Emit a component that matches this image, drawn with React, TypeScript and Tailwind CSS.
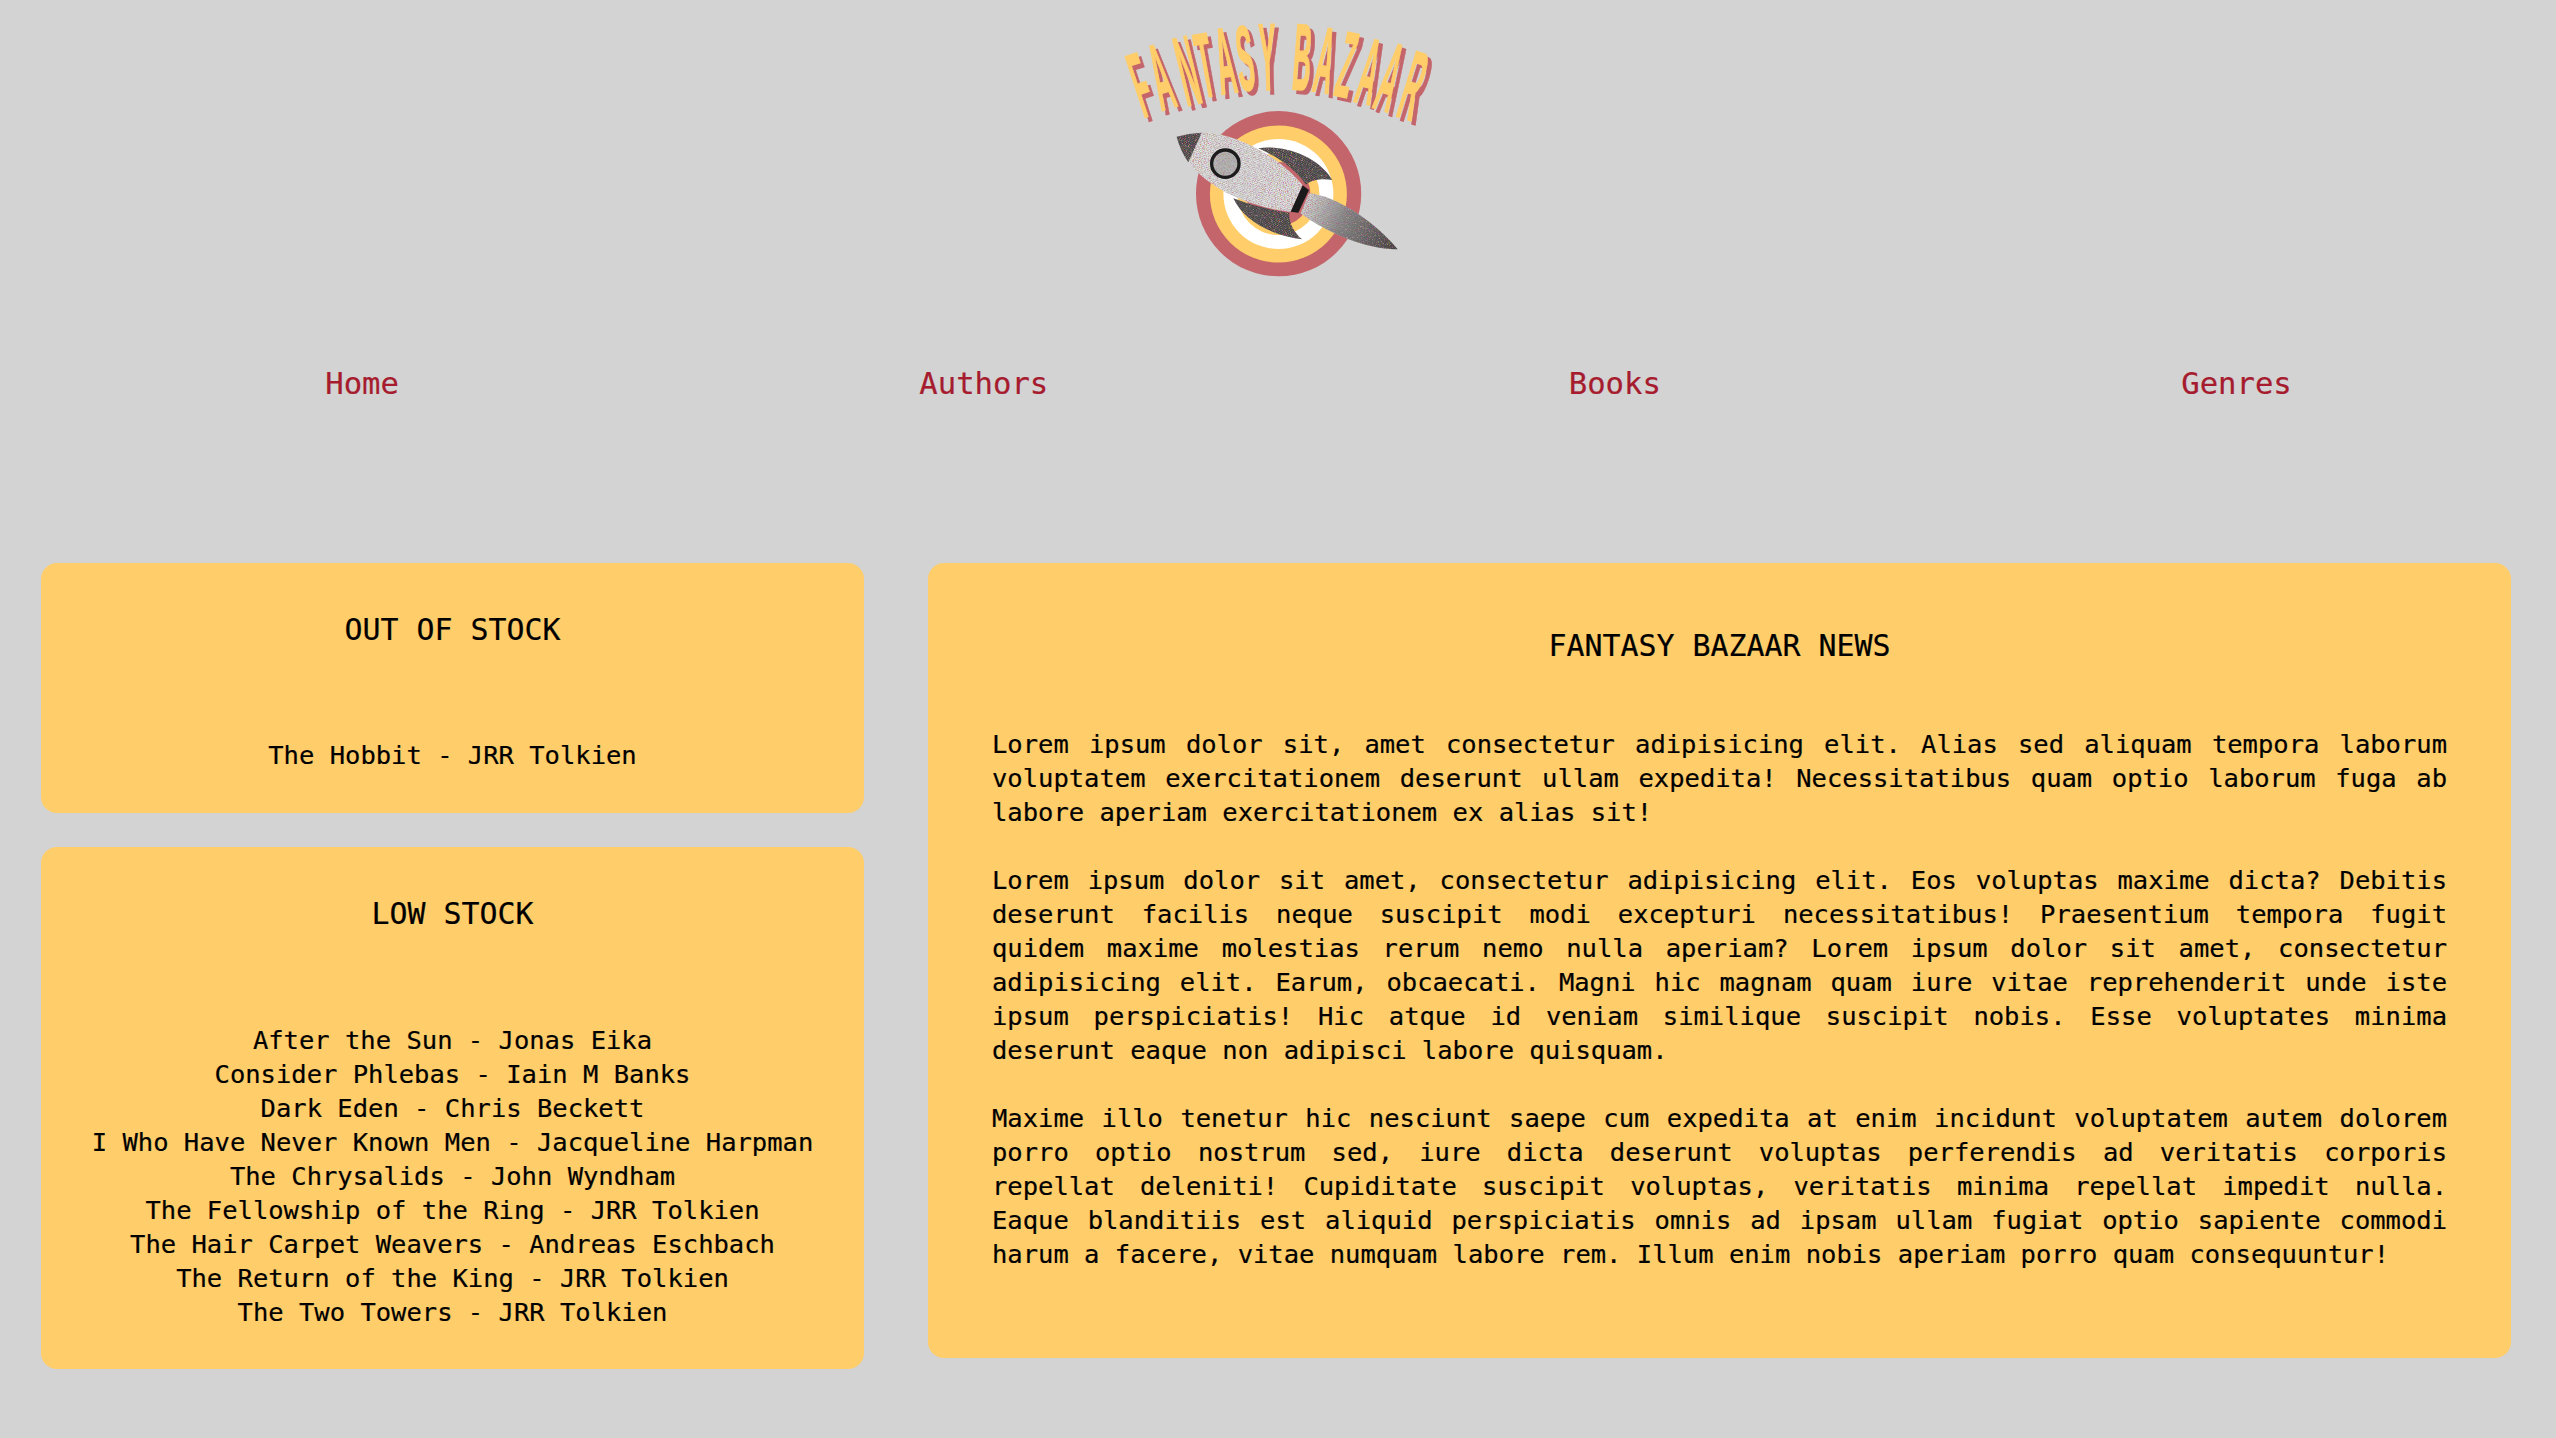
const outOfStock = ['The Hobbit - JRR Tolkien'];

const lowStock = [
  'After the Sun - Jonas Eika',
  'Consider Phlebas - Iain M Banks',
  'Dark Eden - Chris Beckett',
  'I Who Have Never Known Men - Jacqueline Harpman',
  'The Chrysalids - John Wyndham',
  'The Fellowship of the Ring - JRR Tolkien',
  'The Hair Carpet Weavers - Andreas Eschbach',
  'The Return of the King - JRR Tolkien',
  'The Two Towers - JRR Tolkien',
];

const news = [
  'Lorem ipsum dolor sit, amet consectetur adipisicing elit. Alias sed aliquam tempora laborum voluptatem exercitationem deserunt ullam expedita! Necessitatibus quam optio laborum fuga ab labore aperiam exercitationem ex alias sit!',
  'Lorem ipsum dolor sit amet, consectetur adipisicing elit. Eos voluptas maxime dicta? Debitis deserunt facilis neque suscipit modi excepturi necessitatibus! Praesentium tempora fugit quidem maxime molestias rerum nemo nulla aperiam? Lorem ipsum dolor sit amet, consectetur adipisicing elit. Earum, obcaecati. Magni hic magnam quam iure vitae reprehenderit unde iste ipsum perspiciatis! Hic atque id veniam similique suscipit nobis. Esse voluptates minima deserunt eaque non adipisci labore quisquam.',
  'Maxime illo tenetur hic nesciunt saepe cum expedita at enim incidunt voluptatem autem dolorem porro optio nostrum sed, iure dicta deserunt voluptas perferendis ad veritatis corporis repellat deleniti! Cupiditate suscipit voluptas, veritatis minima repellat impedit nulla. Eaque blanditiis est aliquid perspiciatis omnis ad ipsam ullam fugiat optio sapiente commodi harum a facere, vitae numquam labore rem. Illum enim nobis aperiam porro quam consequuntur!',
];

// top and bottom of each arched letter, measured off the logo
const letters: [string, number, number, number, number][] = [
  ['F', 62, 120, 122, 302],
  ['A', 125, 92, 180, 280],
  ['N', 208, 68, 256, 268],
  ['T', 268, 58, 302, 245],
  ['A', 330, 42, 360, 235],
  ['S', 395, 35, 415, 225],
  ['Y', 470, 28, 475, 225],
  ['B', 585, 30, 570, 225],
  ['A', 660, 40, 630, 232],
  ['Z', 730, 55, 690, 245],
  ['A', 800, 75, 755, 265],
  ['A', 870, 90, 810, 285],
  ['R', 940, 115, 880, 310],
];

function ArchedTitle({ color, dx, dy }: { color: string; dx: number; dy: number }) {
  return (
    <g transform={`translate(${1110 + dx} ${15 + dy}) scale(0.3333)`}>
      {letters.map(([ch, tx, ty, bx, by], i) => {
        const angle = (Math.atan2(tx - bx, by - ty) * 180) / Math.PI;
        const len = Math.hypot(tx - bx, by - ty);
        return (
          <text
            key={i}
            transform={`translate(${bx} ${by}) rotate(${angle}) scale(0.27 ${len / 194})`}
            fontFamily="'Liberation Sans', sans-serif"
            fontWeight="700"
            fontSize="282"
            textAnchor="middle"
            fill={color}
            stroke={color}
            strokeWidth="4"
          >
            {ch}
          </text>
        );
      })}
    </g>
  );
}

function Logo() {
  return (
    <svg viewBox="1078 0 400 300" className="mx-auto block h-[300px] w-[400px]">
      <defs>
        <pattern id="lightGrain" width="6" height="6" patternUnits="userSpaceOnUse" patternTransform="rotate(-20)">
          <rect width="6" height="6" fill="#ebe9eb" />
          <rect width="6" height="1.5" fill="#a8aca8" />
        </pattern>
        <pattern id="darkGrain" width="5" height="5" patternUnits="userSpaceOnUse" patternTransform="rotate(30)">
          <rect width="5" height="5" fill="#5a5a5a" />
          <rect width="5" height="1.7" fill="#2c2c2c" />
        </pattern>
        <linearGradient id="flameShade" x1="392" y1="260" x2="683" y2="418" gradientUnits="userSpaceOnUse">
          <stop offset="0" stopColor="#4a4a4a" stopOpacity="0" />
          <stop offset="0.45" stopColor="#3a3a3a" stopOpacity="0.55" />
          <stop offset="1" stopColor="#2a2a2a" stopOpacity="0.9" />
        </linearGradient>
        <filter id="print" x="0" y="0" width="1" height="1" colorInterpolationFilters="sRGB">
          <feTurbulence type="fractalNoise" baseFrequency="0.33 0.45" numOctaves="1" seed="4" result="noise" />
          <feColorMatrix
            in="noise"
            type="matrix"
            values="1.5 0 0 0 -0.25  0 1.5 0 0 -0.25  0 0 1.5 0 -0.25  2 0 0 0 -0.85"
            result="flecks"
          />
          <feComposite in="flecks" in2="SourceGraphic" operator="in" result="clipped" />
          <feMerge>
            <feMergeNode in="SourceGraphic" />
            <feMergeNode in="clipped" />
          </feMerge>
        </filter>
      </defs>

      <circle cx="1278.6" cy="193.7" r="82.6" fill="#c4646b" />
      <circle cx="1278.4" cy="194" r="68.5" fill="#ffcd69" />
      <circle cx="1278.4" cy="194" r="55" fill="#ffffff" />
      <circle cx="1278.4" cy="194" r="41" fill="#ffcd69" />
      <circle cx="1278.4" cy="194" r="32" fill="#c4646b" />

      <g transform="translate(1170 110) scale(0.3333)">
        <path d="M265 115 C325 103 440 130 487 210 C455 205 425 210 408 224 C370 170 320 140 265 115Z" fill="url(#darkGrain)" filter="url(#print)" />
        <path d="M190 265 C240 285 300 300 358 308 C355 335 370 365 396 388 C300 375 220 330 190 265Z" fill="url(#darkGrain)" filter="url(#print)" />
        <g filter="url(#print)">
          <path d="M417 250 C490 255 610 330 683 418 C600 420 480 375 392 310Z" fill="url(#lightGrain)" />
          <path d="M417 250 C490 255 610 330 683 418 C600 420 480 375 392 310Z" fill="url(#flameShade)" />
        </g>
        <path d="M95 68 C200 66 335 145 398 226 L362 305 C255 295 125 245 55 157Z" fill="url(#lightGrain)" filter="url(#print)" />
        <path d="M20 80 Q55 70 95 68 L55 157 Q30 120 20 80Z" fill="url(#darkGrain)" filter="url(#print)" />
        <path d="M398 226 L417 240 L385 308 L362 305Z" fill="#1a1a1a" />
        <circle cx="166" cy="161" r="36" fill="#b4b4b4" filter="url(#print)" />
        <circle cx="166" cy="161" r="41" fill="none" stroke="#1c1c1c" strokeWidth="10" />
      </g>

      <ArchedTitle color="#c4646b" dx={4} dy={4} />
      <ArchedTitle color="#ffcd69" dx={0} dy={0} />
    </svg>
  );
}

function StockCard({ title, books, gap }: { title: string; books: string[]; gap: string }) {
  return (
    <section className="rounded-2xl bg-[#ffcd69] pt-[47px] pb-[40px] text-center">
      <h3 className="text-[29.9px] leading-[40px] font-normal">{title}</h3>
      <ul className={`${gap} text-[25.5px] leading-[34px]`}>
        {books.map((book) => (
          <li key={book}>{book}</li>
        ))}
      </ul>
    </section>
  );
}

export default function App() {
  return (
    <div className="h-[1438px] overflow-hidden bg-[#d3d3d3] font-['DejaVu_Sans_Mono',monospace] text-black [-webkit-text-stroke:0.2px]">
      <header>
        <Logo />
        <nav className="mt-[64px] flex justify-around pr-[4px] pl-[65px] text-[30.6px] leading-[40px] text-[#a61c2e]">
          <a href="#">Home</a>
          <a href="#">Authors</a>
          <a href="#">Books</a>
          <a href="#">Genres</a>
        </nav>
      </header>

      <main className="mt-[159px] flex items-start gap-[64px] pr-[45px] pl-[41px]">
        <aside className="flex w-[823px] flex-col gap-[34px]">
          <StockCard title="OUT OF STOCK" books={outOfStock} gap="mt-[88px] mb-[1px]" />
          <StockCard title="LOW STOCK" books={lowStock} gap="mt-[89px]" />
        </aside>

        <section className="flex-1 rounded-2xl bg-[#ffcd69] px-[64px] pt-[63px] pb-[87px]">
          <h3 className="text-center text-[29.9px] leading-[40px] font-normal">FANTASY BAZAAR NEWS</h3>
          <div className="mt-[61px] flex flex-col gap-[34px] text-justify text-[25.5px] leading-[34px]">
            {news.map((para, i) => (
              <p key={i}>{para}</p>
            ))}
          </div>
        </section>
      </main>
    </div>
  );
}
